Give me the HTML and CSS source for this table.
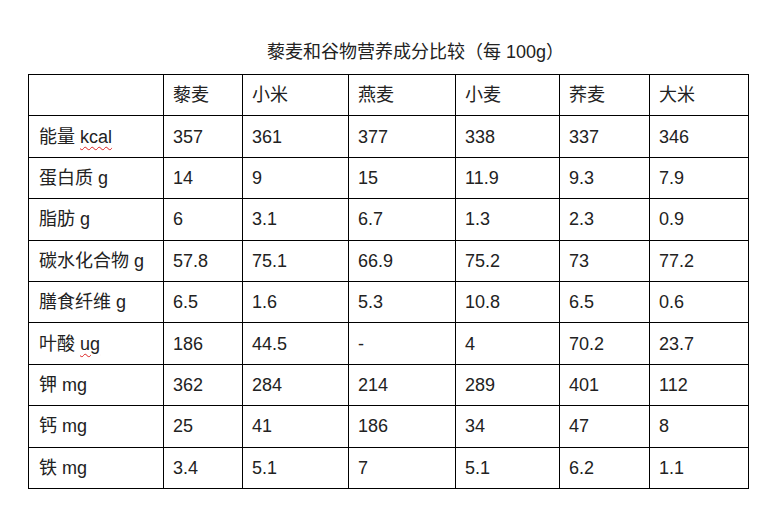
FILE: index.html
```html
<!DOCTYPE html>
<html lang="zh-CN">
<head>
<meta charset="utf-8">
<title>藜麦和谷物营养成分比较</title>
<link rel="stylesheet" href="styles.css">
</head>
<body>
<div class="page">
  <h1 class="title">藜麦和谷物营养成分比较（每 100g）</h1>
  <table class="grid">
    <colgroup>
      <col class="c0"><col class="c1"><col class="c2"><col class="c3"><col class="c4"><col class="c5"><col class="c6">
    </colgroup>
    <tr><td></td><td>藜麦</td><td>小米</td><td>燕麦</td><td>小麦</td><td>荞麦</td><td>大米</td></tr>
    <tr><td>能量 <span class="spell">kcal</span></td><td>357</td><td>361</td><td>377</td><td>338</td><td>337</td><td>346</td></tr>
    <tr><td>蛋白质 g</td><td>14</td><td>9</td><td>15</td><td>11.9</td><td>9.3</td><td>7.9</td></tr>
    <tr><td>脂肪 g</td><td>6</td><td>3.1</td><td>6.7</td><td>1.3</td><td>2.3</td><td>0.9</td></tr>
    <tr><td>碳水化合物 g</td><td>57.8</td><td>75.1</td><td>66.9</td><td>75.2</td><td>73</td><td>77.2</td></tr>
    <tr><td>膳食纤维 g</td><td>6.5</td><td>1.6</td><td>5.3</td><td>10.8</td><td>6.5</td><td>0.6</td></tr>
    <tr><td>叶酸 <span class="spell">ug</span></td><td>186</td><td>44.5</td><td>-</td><td>4</td><td>70.2</td><td>23.7</td></tr>
    <tr><td>钾 mg</td><td>362</td><td>284</td><td>214</td><td>289</td><td>401</td><td>112</td></tr>
    <tr><td>钙 mg</td><td>25</td><td>41</td><td>186</td><td>34</td><td>47</td><td>8</td></tr>
    <tr><td>铁 mg</td><td>3.4</td><td>5.1</td><td>7</td><td>5.1</td><td>6.2</td><td>1.1</td></tr>
  </table>
</div>
</body>
</html>
```
FILE: styles.css
```css
html, body {
  margin: 0;
  padding: 0;
  background: #fff;
}
body {
  font-family: "Liberation Sans", "Noto Sans CJK SC", sans-serif;
  color: #222;
}
.page {
  width: 781px;
  height: 524px;
  padding-top: 40px;
  box-sizing: border-box;
}
.title {
  margin: 0 0 10px 0;
  padding-left: 267px;
  font-size: 18px;
  font-weight: normal;
  line-height: 24px;
  white-space: nowrap;
}
.grid {
  margin-left: 28px;
  border-collapse: collapse;
  table-layout: fixed;
  width: 720px;
  font-size: 18px;
}
.c0 { width: 135px; }
.c1 { width: 79px; }
.c2 { width: 106px; }
.c3 { width: 107px; }
.c4 { width: 104px; }
.c5 { width: 90px; }
.c6 { width: 99px; }
.grid tr {
  height: 41.4px;
}
.grid td {
  border: 1px solid #000;
  padding: 0 0 0 9px;
  vertical-align: middle;
  white-space: nowrap;
  line-height: 20px;
}
.grid td:first-child {
  padding-left: 10px;
}
.spell {
  text-decoration: underline wavy #d22;
  text-decoration-thickness: 1px;
  text-underline-offset: 3px;
}
```
